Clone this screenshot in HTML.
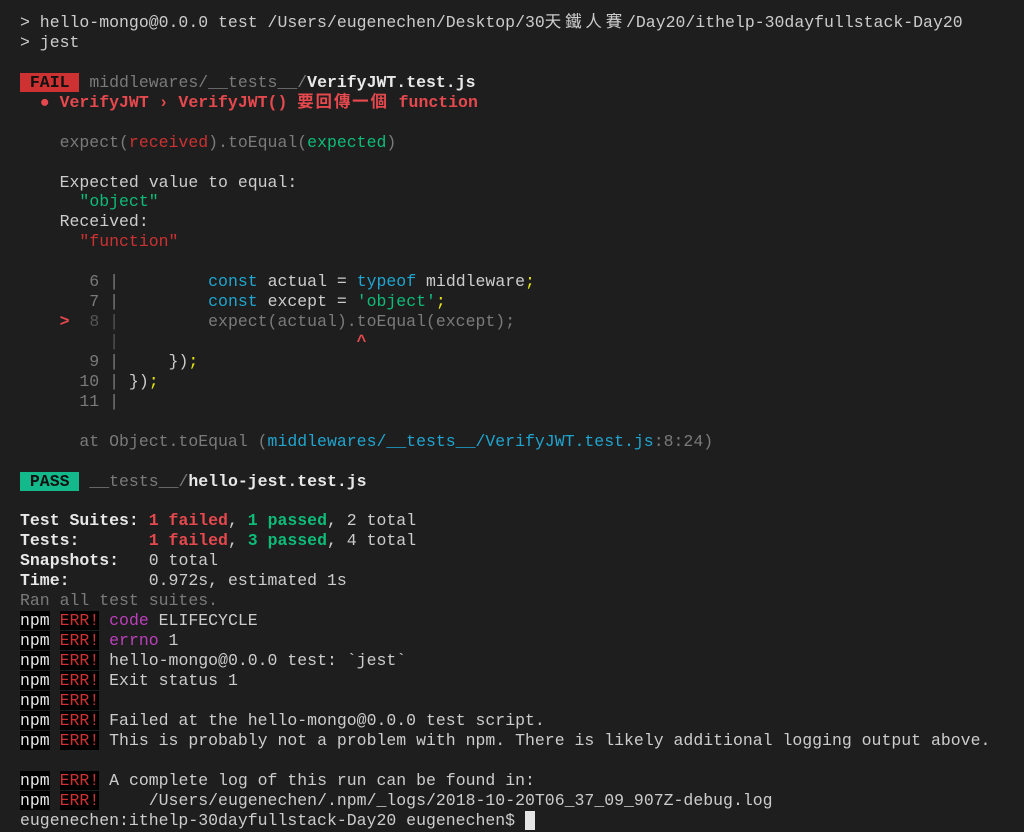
<!DOCTYPE html>
<html><head><meta charset="utf-8"><style>
html,body{margin:0;padding:0;background:#1e1e1e;width:1024px;height:832px;overflow:hidden}
pre{margin:0;padding:13px 0 0 20px;font-family:"Liberation Mono","Noto Sans CJK TC",monospace;font-size:16.5px;line-height:19.93px;color:#cccccc;white-space:pre}
.g{color:#808080}.w{color:#e8e8e8}.b{font-weight:bold}
.r{color:#e5484d}.dr{color:#cd3131}.gr{color:#0dbc79}.c{color:#1fa5d0}.y{color:#e5e510}.m{color:#bc3fbc}
.fail{background:#cd3131;color:#111;font-weight:bold}
.pass{background:#13b98a;color:#111;font-weight:bold}
.k{background:#000;color:#e5e5e5}.e{background:#000;color:#cd3131}
.dim{color:#7a7a7a}.dd{color:#555}
.cj1{letter-spacing:3.8px}.cj2{letter-spacing:1.8px}
</style></head><body><pre>&gt; hello-mongo@0.0.0 test /Users/eugenechen/Desktop/30<span class="cj1">天鐵人賽</span>/Day20/ithelp-30dayfullstack-Day20
&gt; jest

<span class="fail"> FAIL </span> <span class="dim">middlewares/__tests__/</span><span class="b w">VerifyJWT.test.js</span>
<span class="r b">  ● VerifyJWT › VerifyJWT() <span class="cj2">要回傳一個</span> function</span>

<span class="dim">    expect(</span><span class="dr">received</span><span class="dim">).toEqual(</span><span class="gr">expected</span><span class="dim">)</span>

    Expected value to equal:
      <span class="gr">"object"</span>
    Received:
      <span class="dr">"function"</span>

<span class="dim">       6 |</span>         <span class="c">const</span> actual = <span class="c">typeof</span> middleware<span class="y">;</span>
<span class="dim">       7 |</span>         <span class="c">const</span> except = <span class="gr">'object'</span><span class="y">;</span>
<span class="r b">    &gt;</span><span class="dd">  8 |</span><span class="dim">         expect(actual).toEqual(except);</span>
<span class="dd">         |</span>                        <span class="r b">^</span>
<span class="dim">       9 |</span>     })<span class="y">;</span>
<span class="dim">      10 |</span> })<span class="y">;</span>
<span class="dim">      11 |</span>

<span class="dim">      at Object.toEqual (</span><span class="c">middlewares/__tests__/VerifyJWT.test.js</span><span class="dim">:8:24)</span>

<span class="pass"> PASS </span> <span class="dim">__tests__/</span><span class="b w">hello-jest.test.js</span>

<span class="b w">Test Suites: </span><span class="r b">1 failed</span>, <span class="gr b">1 passed</span>, 2 total
<span class="b w">Tests:       </span><span class="r b">1 failed</span>, <span class="gr b">3 passed</span>, 4 total
<span class="b w">Snapshots:   </span>0 total
<span class="b w">Time:        </span>0.972s, estimated 1s
<span class="dim">Ran all test suites.</span>
<span class="k">npm</span> <span class="e">ERR!</span> <span class="m">code</span> ELIFECYCLE
<span class="k">npm</span> <span class="e">ERR!</span> <span class="m">errno</span> 1
<span class="k">npm</span> <span class="e">ERR!</span> hello-mongo@0.0.0 test: `jest`
<span class="k">npm</span> <span class="e">ERR!</span> Exit status 1
<span class="k">npm</span> <span class="e">ERR!</span>
<span class="k">npm</span> <span class="e">ERR!</span> Failed at the hello-mongo@0.0.0 test script.
<span class="k">npm</span> <span class="e">ERR!</span> This is probably not a problem with npm. There is likely additional logging output above.

<span class="k">npm</span> <span class="e">ERR!</span> A complete log of this run can be found in:
<span class="k">npm</span> <span class="e">ERR!</span>     /Users/eugenechen/.npm/_logs/2018-10-20T06_37_09_907Z-debug.log
eugenechen:ithelp-30dayfullstack-Day20 eugenechen$ <span style="background:#e5e5e5"> </span></pre></body></html>
